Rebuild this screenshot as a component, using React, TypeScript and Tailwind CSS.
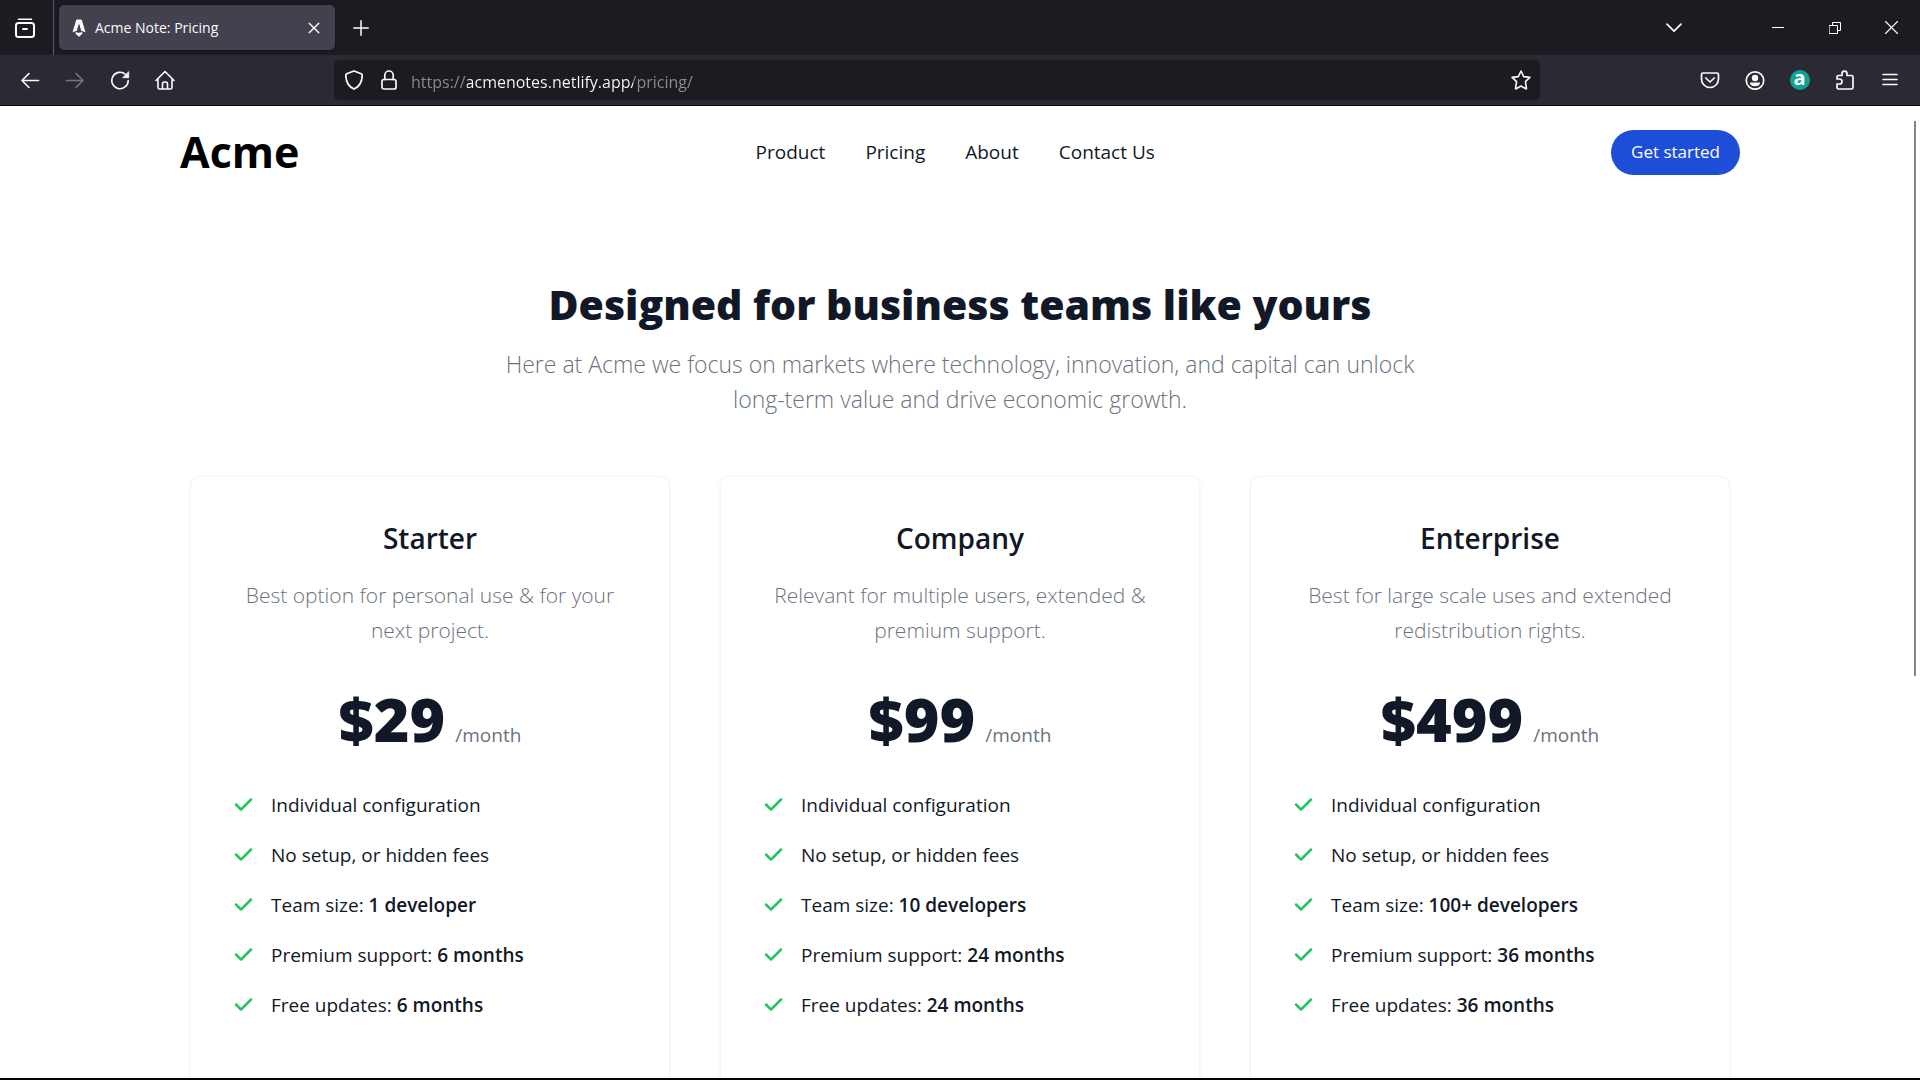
import type { ReactNode } from "react";

type Plan = {
  name: string;
  blurb: string;
  price: string;
  team: string;
  support: string;
  updates: string;
};

const plans: Plan[] = [
  {
    name: "Starter",
    blurb: "Best option for personal use & for your next project.",
    price: "$29",
    team: "1 developer",
    support: "6 months",
    updates: "6 months",
  },
  {
    name: "Company",
    blurb: "Relevant for multiple users, extended & premium support.",
    price: "$99",
    team: "10 developers",
    support: "24 months",
    updates: "24 months",
  },
  {
    name: "Enterprise",
    blurb: "Best for large scale uses and extended redistribution rights.",
    price: "$499",
    team: "100+ developers",
    support: "36 months",
    updates: "36 months",
  },
];

function Icon({ w = 20, h = 20, children, sw = 1.5 }: { w?: number; h?: number; sw?: number; children: ReactNode }) {
  return (
    <svg
      width={w}
      height={h}
      viewBox={`0 0 ${w} ${h}`}
      fill="none"
      stroke="currentColor"
      strokeWidth={sw}
      strokeLinecap="round"
      strokeLinejoin="round"
      aria-hidden="true"
      className="shrink-0"
    >
      {children}
    </svg>
  );
}

function ToolButton({ label, dim, children }: { label: string; dim?: boolean; children: ReactNode }) {
  return (
    <button
      type="button"
      aria-label={label}
      className={`flex h-10 w-[45px] items-center justify-center ${dim ? "text-[#77767e]" : "text-[#fbfbfe]"}`}
    >
      {children}
    </button>
  );
}

function WindowButton({ label, children }: { label: string; children: ReactNode }) {
  return (
    <button type="button" aria-label={label} className="flex h-full w-[57px] items-center justify-center text-white">
      {children}
    </button>
  );
}

function TabStrip() {
  return (
    <div className="flex h-[55px] shrink-0 items-center bg-[#1c1b22] text-[#fbfbfe]">
      <div className="flex h-full w-[54px] items-center border-r border-[#5b5a62] pl-[11px]">
        <button type="button" aria-label="Firefox View" className="p-1">
          <Icon sw={2}>
            <path d="M3.5 1.2h13" strokeWidth={1.5} />
            <rect x="1" y="5" width="18" height="14" rx="2.5" />
            <path d="M8 11h4" strokeWidth={1.8} />
          </Icon>
        </button>
      </div>
      <div className="ml-[5px] flex h-[45px] w-[276px] items-center rounded-[5px] bg-[#42414d] pr-[9px] pl-[13px] shadow-[0_0_3px_rgba(0,0,0,0.5)]">
        <svg width="14" height="18" viewBox="0 0 14 18" fill="currentColor" aria-hidden="true">
          <path d="M4.2 1Q4.500.4 5.200.4h3.600q.7 0 1 .6l3.700 12.200q-1.900-1-4.200-1.300L7.400 5.400a.5.500 0 0 0-.8 0L4.700 11.900q-2.300.3-4.200 1.300z" />
          <path d="M3.700 13c1.800 1.100 4.800 1.100 6.600 0 .4 1.500-.4 2.300-1.300 3-.8.500-1.200 1-2 1.900-.8-.9-1.200-1.400-2-1.900-.9-.7-1.700-1.500-1.300-3z" />
        </svg>
        <span className="ml-[9px] flex-1 text-sm">Acme Note: Pricing</span>
        <button type="button" aria-label="Close tab" className="p-1.5">
          <Icon w={12} h={12} sw={1.4}>
            <path d="M1.2 1.2l9.6 9.6M10.8 1.2L1.2 10.8" />
          </Icon>
        </button>
      </div>
      <button type="button" aria-label="New tab" className="ml-[14px] p-1">
        <Icon w={16} h={16}>
          <path d="M8 .8v14.4M.8 8h14.4" />
        </Icon>
      </button>
      <div className="ml-auto flex h-full items-center">
        <button type="button" aria-label="List all tabs" className="mr-[63px] p-1">
          <Icon w={16} h={10} sw={1.7}>
            <path d="M1 1.2l7 7 7-7" />
          </Icon>
        </button>
        <WindowButton label="Minimize">
          <Icon w={12} h={12} sw={1}>
            <path d="M0 5.5h12" strokeLinecap="butt" />
          </Icon>
        </WindowButton>
        <WindowButton label="Restore">
          <Icon w={12} h={12} sw={1}>
            <path strokeLinejoin="miter" d="M.5 3.5h8v8h-8zM3.5 3.5v-3h8v8h-3" />
          </Icon>
        </WindowButton>
        <WindowButton label="Close">
          <Icon w={13} h={13} sw={1.1}>
            <path d="M.5.5l12 12M12.500.5l-12 12" />
          </Icon>
        </WindowButton>
      </div>
    </div>
  );
}

function Toolbar() {
  return (
    <div className="flex h-[51px] shrink-0 items-center border-b border-[#0c0c0d] bg-[#2b2a33] pr-2 pl-[7px] text-[#fbfbfe]">
      <ToolButton label="Back">
        <Icon sw={1.6}>
          <path d="M18.5 10.5H2M9 3.5l-7 7 7 7" />
        </Icon>
      </ToolButton>
      <ToolButton label="Forward" dim>
        <Icon sw={1.6}>
          <path d="M1.5 10.5H18M11 3.5l7 7-7 7" />
        </Icon>
      </ToolButton>
      <ToolButton label="Reload">
        <Icon sw={1.6}>
          <path d="M18.2 10.5a8.2 8.2 0 1 1-2.6-6" />
          <path d="M18.7 2v5.7h-5.7z" fill="currentColor" strokeWidth={0.8} />
        </Icon>
      </ToolButton>
      <ToolButton label="Home">
        <Icon sw={1.6}>
          <path d="M1 10.5l9-9 9 9M3 9v8.500q0 1.500 1.500 1.500h11q1.500 0 1.500-1.500V9M7.500 19v-5q0-2 2-2h1q2 0 2 2v5" />
        </Icon>
      </ToolButton>
      <div className="mx-[147px] flex h-10 min-w-0 flex-1 items-center rounded-[5px] bg-[#1c1b22] pr-[9px] pl-[11px]">
        <button type="button" aria-label="Tracking protection">
          <Icon w={18} h={20} sw={1.7}>
            <path d="M9 1l7.300 2.800q.9.400.9 1.300c0 6-2.700 11.500-8.200 14C3.500 16.600.8 11.100.8 5.100q0-.9.9-1.300z" />
          </Icon>
        </button>
        <button type="button" aria-label="Site security" className="ml-[18px]">
          <Icon w={16} h={20} sw={1.7}>
            <rect x="1" y="9.5" width="14" height="9.5" rx="1.8" />
            <path d="M3.8 9.5V5.200a4.200 4.200 0 0 1 8.400 0v4.300" />
          </Icon>
        </button>
        <input
          type="text"
          aria-label="Address"
          defaultValue="https://acmenotes.netlify.app/pricing/"
          className="ml-[14px] min-w-0 flex-1 bg-[linear-gradient(90deg,#8c8b90_56px,#fbfbfe_56px,#fbfbfe_222px,#8c8b90_222px)] bg-clip-text pt-[3px] text-base text-transparent caret-white outline-none"
        />
        <button type="button" aria-label="Bookmark this page">
          <Icon sw={1.6}>
            <path d="M10 1l2.700 5.600 6.200.8-4.500 4.300 1.100 6.700q0 .7-.7.400L10 16l-4.800 2.800q-.7.300-.7-.4l1.100-6.700L1.100 7.400l6.200-.8z" />
          </Icon>
        </button>
      </div>
      <ToolButton label="Save to Pocket">
        <Icon sw={1.7}>
          <path d="M3 3h14q1.500 0 1.500 1.500V9a8.500 8.500 0 0 1-17 0V4.500Q1.500 3 3 3z" />
          <path d="M5.800 8l4.200 4 4.200-4" />
        </Icon>
      </ToolButton>
      <ToolButton label="Account">
        <Icon sw={1.7}>
          <circle cx="10" cy="10.5" r="8.7" />
          <circle cx="10" cy="8" r="3.2" fill="currentColor" stroke="none" />
          <path d="M5 12.500h10q0 3.800-5 3.800t-5-3.800z" fill="currentColor" stroke="none" />
        </Icon>
      </ToolButton>
      <ToolButton label="Extension">
        <span className="flex size-5 items-center justify-center rounded-full bg-[#0aa595] text-xl leading-none font-bold text-white">
          <span className="-mt-1">a</span>
        </span>
      </ToolButton>
      <ToolButton label="Extensions">
        <Icon sw={1.7}>
          <path d="M2 9V7q0-1.500 1.500-1.500H7V3.600a2.500 2.500 0 0 1 5 0v1.900h4.500Q18 5.500 18 7v10.500q0 1.500-1.500 1.500h-13Q2 19 2 17.500V14h2.500a2.500 2.500 0 0 0 0-5z" />
        </Icon>
      </ToolButton>
      <ToolButton label="Open application menu">
        <Icon w={16} sw={1.5}>
          <path d="M1 4.500h14M1 9.500h14M1 14.500h14" />
        </Icon>
      </ToolButton>
    </div>
  );
}

function Feature({ text, value }: { text: string; value?: string }) {
  return (
    <li className="flex items-center gap-[15px] leading-[30px]">
      <svg className="size-[25px] shrink-0 text-[#22c55e]" fill="currentColor" viewBox="0 0 20 20" aria-hidden="true">
        <path
          fillRule="evenodd"
          clipRule="evenodd"
          d="M16.707 5.293a1 1 0 010 1.414l-8 8a1 1 0 01-1.414 0l-4-4a1 1 0 011.414-1.414L8 12.586l7.293-7.293a1 1 0 011.414 0z"
        />
      </svg>
      <span>
        {text}
        {value && <span className="font-semibold"> {value}</span>}
      </span>
    </li>
  );
}

function PlanCard({ plan }: { plan: Plan }) {
  return (
    <article className="flex flex-col rounded-[10px] border border-[#f3f4f6] bg-white px-10 pt-[41px] pb-10 text-center shadow-[0_1px_4px_rgba(0,0,0,0.05)]">
      <h3 className="text-[28px] leading-10 font-semibold">{plan.name}</h3>
      <p className="mt-5 text-[21px] leading-[35px] font-light text-[#6b7280]">{plan.blurb}</p>
      <div className="mt-[41px] mb-10 flex items-baseline justify-center">
        <span className="mr-2.5 text-[61px] leading-[60px] font-extrabold">{plan.price}</span>
        <span className="text-[#6b7280]">/month</span>
      </div>
      <ul className="flex flex-col gap-5 pb-16 text-left">
        <Feature text="Individual configuration" />
        <Feature text="No setup, or hidden fees" />
        <Feature text="Team size:" value={plan.team} />
        <Feature text="Premium support:" value={plan.support} />
        <Feature text="Free updates:" value={plan.updates} />
      </ul>
    </article>
  );
}

export default function App() {
  return (
    <div className="flex h-screen flex-col overflow-hidden border-b-2 border-black bg-white font-['Open_Sans','Noto_Sans',sans-serif]">
      <TabStrip />
      <Toolbar />
      <div className="relative min-h-0 flex-1 overflow-hidden text-[19px] text-[#111827]">
        <header className="mx-auto flex max-w-[1600px] items-center justify-between px-5 pt-[18px]">
          <a href="#home" className="text-[43px] leading-[56px] font-bold text-black">
            Acme
          </a>
          <nav className="flex gap-10">
            <a href="#product">Product</a>
            <a href="#pricing">Pricing</a>
            <a href="#about">About</a>
            <a href="#contact">Contact Us</a>
          </nav>
          <button type="button" className="h-[45px] rounded-full bg-[#1d4ed8] px-5 text-[17px] text-white">
            Get started
          </button>
        </header>
        <main className="mx-auto max-w-[1600px] px-[30px] pt-[94px]">
          <div className="mx-auto max-w-[960px] text-center">
            <h2 className="text-[41px] leading-[60px] font-extrabold">Designed for business teams like yours</h2>
            <p className="mt-[13px] text-[23px] leading-[35px] font-light text-[#6b7280]">
              Here at Acme we focus on markets where technology, innovation, and capital can unlock long-term value and
              drive economic growth.
            </p>
          </div>
          <div className="mt-[59px] grid grid-cols-3 gap-[50px]">
            {plans.map((plan) => (
              <PlanCard key={plan.name} plan={plan} />
            ))}
          </div>
        </main>
        <div className="absolute top-[15px] right-1 h-[555px] w-0.5 bg-[#858585]" />
      </div>
    </div>
  );
}
